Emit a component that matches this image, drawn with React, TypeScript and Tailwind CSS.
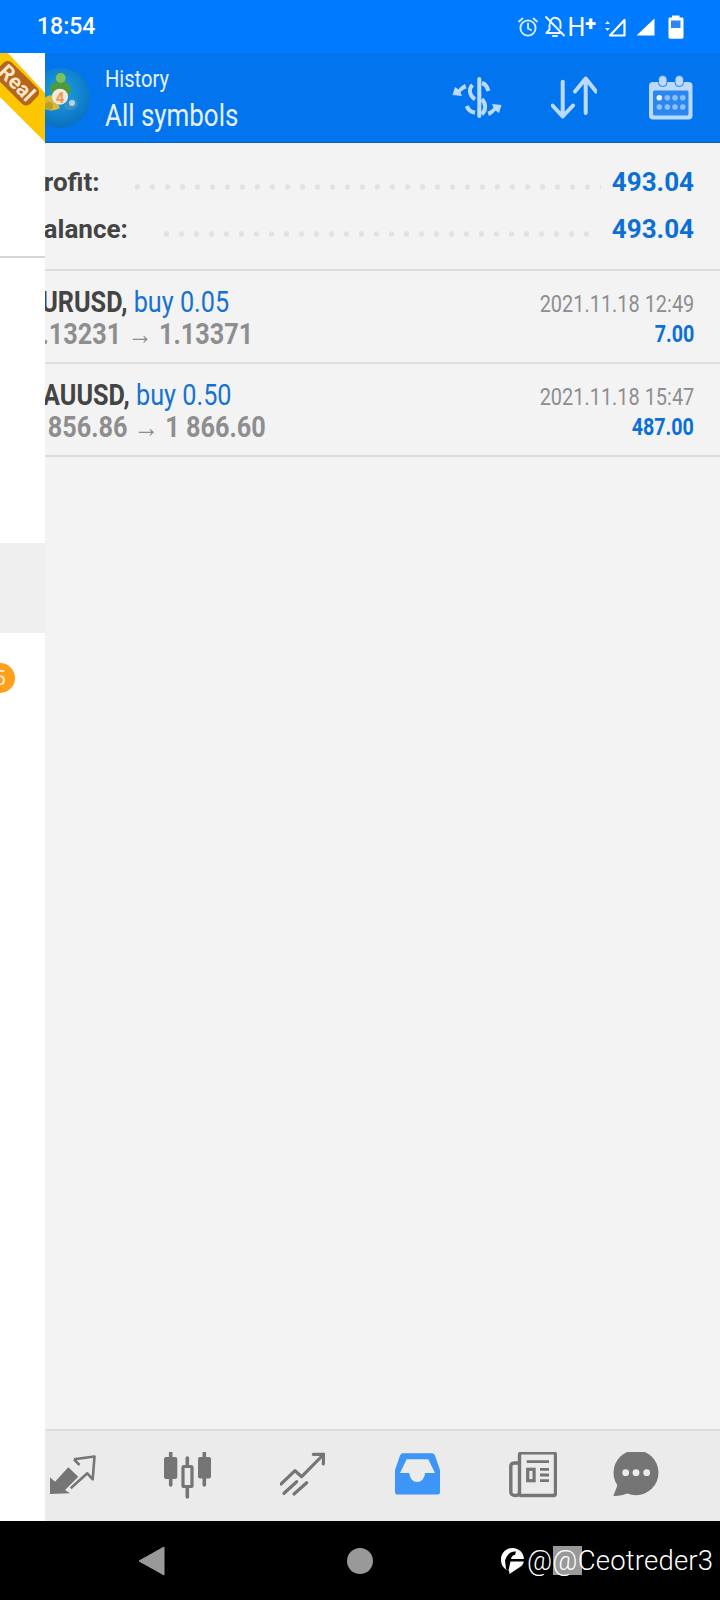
import React from 'react';

const condensed = "font-['Roboto',sans-serif] whitespace-nowrap";

function AlarmIcon() {
  return (
    <svg width="22" height="22" viewBox="0 0 22 22" fill="none" stroke="#d9ebff" strokeWidth="1.9" strokeLinecap="round">
      <circle cx="11" cy="12" r="7.6" />
      <path d="M11 7.5V12.5L14 14" />
      <path d="M2 5.5L5.5 2.5M20 5.5L16.5 2.5" />
    </svg>
  );
}

function MutedBellIcon() {
  return (
    <svg width="22" height="24" viewBox="0 0 22 24" fill="none" stroke="#eaf3ff" strokeWidth="2" strokeLinecap="round" strokeLinejoin="round">
      <path d="M6 8.5C6 6.5 6.5 5 8 4C9 3 11 2.5 13 3.3C15.5 4.3 16.5 6.5 16.5 9V13M5.5 10V14.5L2.5 18H16" />
      <path d="M9 21H13" />
      <path d="M2 2L20 20.5" />
    </svg>
  );
}

function DataSignalIcon() {
  return (
    <svg width="21" height="20" viewBox="0 0 21 20" fill="none">
      <path d="M19.5 3V18.5H5L19.5 3Z" stroke="#fff" strokeWidth="2.2" strokeLinejoin="round" />
      <path d="M2.5 4L5 7H0Z M2.5 14L5 11H0Z" fill="#d9ebff" />
    </svg>
  );
}

function SignalIcon() {
  return (
    <svg width="19" height="18" viewBox="0 0 19 18">
      <path d="M18.5 0.5V17.5H0.5Z" fill="#fff" />
    </svg>
  );
}

function BatteryIcon() {
  return (
    <svg width="16" height="24" viewBox="0 0 16 24">
      <path d="M4 0.5H11.5V2.5H14C15 2.5 15.5 3 15.5 4V22C15.5 23 15 23.7 14 23.7H2C1 23.7 0.5 23 0.5 22V4C0.5 3 1 2.5 2 2.5H4Z" fill="#fff" />
      <rect x="3" y="5.5" width="9.5" height="7.5" fill="#2f86f2" />
    </svg>
  );
}

function SwapIcon() {
  return (
    <svg width="50" height="42" viewBox="0 0 50 42" fill="none" stroke="#bcdaff" strokeWidth="4">
      <path d="M27.3 2V39" strokeLinecap="round" />
      <path d="M30 6C33 7 35.5 10 36.3 14" />
      <path d="M20.5 8C17 11 16.5 18 23 22.3" />
      <path d="M29.7 22.3C34 26 34.5 33 29.7 37.3" />
      <path d="M14.7 29C16 32.5 19 35 23 35.7" />
      <path d="M13 7C10 8.5 8 10.5 6.5 12.5L3 10L0.5 18L10 19L8.5 15.5C10 13.5 12 12 14.5 11.5Z" fill="#bcdaff" stroke="none" />
      <path d="M13 7C10 8.5 8 10.5 6.5 12.5L3 10L0.5 18L10 19L8.5 15.5C10 13.5 12 12 14.5 11.5Z" fill="#bcdaff" stroke="none" transform="rotate(180 25 23)" />
    </svg>
  );
}

function SortIcon() {
  return (
    <svg width="46" height="44" viewBox="0 0 46 44" fill="none" stroke="#bcdaff" strokeWidth="4" strokeLinecap="round" strokeLinejoin="round">
      <path d="M11.7 5.7V40.5M1.5 29.5L11.7 40.5L22 29.5" />
      <path d="M34.7 37V2.5M24 15.5L34.7 2.5L45 15.5" />
    </svg>
  );
}

function CalendarIcon() {
  return (
    <svg width="44" height="45" viewBox="0 0 44 45">
      <rect x="0" y="7" width="43.5" height="37.5" rx="4" fill="#bcdaff" />
      <rect x="4" y="15.5" width="35.5" height="25" rx="1.5" fill="#2a86f0" />
      <rect x="9.5" y="0.5" width="8.5" height="11" rx="4" fill="#bcdaff" stroke="#1b7cee" strokeWidth="1" />
      <rect x="26" y="0.5" width="8.5" height="11" rx="4" fill="#bcdaff" stroke="#1b7cee" strokeWidth="1" />
      <circle cx="10.3" cy="22.7" r="2.8" fill="#eaf4ff" />
      <circle cx="18.3" cy="22.7" r="2.8" fill="#8cc0fa" />
      <circle cx="26" cy="22.7" r="2.8" fill="#8cc0fa" />
      <circle cx="33.7" cy="22.7" r="2.8" fill="#8cc0fa" />
      <circle cx="10.3" cy="32" r="2.8" fill="#8cc0fa" />
      <circle cx="18.3" cy="32" r="2.8" fill="#8cc0fa" />
      <circle cx="26" cy="32" r="2.8" fill="#8cc0fa" />
      <circle cx="33.7" cy="32" r="2.8" fill="#8cc0fa" />
    </svg>
  );
}

function LogoIcon() {
  return (
    <svg width="60" height="60" viewBox="0 0 60 60" className="shrink-0 -ml-[15px]">
      <defs>
        <radialGradient id="logo-bg" cx="50%" cy="40%" r="60%">
          <stop offset="0%" stopColor="#1ca3e4" />
          <stop offset="100%" stopColor="#0b6fc0" />
        </radialGradient>
      </defs>
      <circle cx="30" cy="30" r="30" fill="url(#logo-bg)" />
      <path d="M13 33C15 28 20 26 24 28L30 40C26 43 18 43 15 41C13 39 13 36 13 33Z" fill="#d7b93b" />
      <circle cx="19" cy="38" r="4" fill="#b99f2a" />
      <path d="M34 38C38 30 44 28 47 33C49 38 45 42 40 42C37 42 35 41 34 38Z" fill="#3b8fc4" />
      <circle cx="42" cy="35" r="3" fill="#a5d8ef" />
      <path d="M20 22C20 15 26 13 30.7 13C36 13 41 16 41 23L38 28H22Z" fill="#4d9a3f" />
      <circle cx="30.7" cy="10" r="5" fill="#7fbf5c" />
      <circle cx="30" cy="28.7" r="8" fill="#f4e9dc" />
      <text x="30" y="34.5" textAnchor="middle" fontSize="15" fontWeight="700" fontFamily="Roboto, sans-serif" fill="#eb9a4c">4</text>
    </svg>
  );
}

function TradeIcon() {
  return (
    <svg width="48" height="48" viewBox="0 0 48 48" fill="none">
      <path d="M2 25.3L7 29.7L20.3 15.3L30.3 24.7L17 38L22 41.3L2 42Z" fill="#757575" />
      <path d="M26 7.3L46.5 4.5L44.7 27.3L39.3 21.3L22.7 36.3M31.5 13L26 7.3" stroke="#757575" strokeWidth="2.6" strokeLinejoin="round" />
    </svg>
  );
}

function QuotesIcon() {
  return (
    <svg width="49" height="48" viewBox="0 0 49 48" fill="none" stroke="#757575">
      <path d="M7.7 1V33M24.3 6V45M41.3 1V33" strokeWidth="3.6" strokeLinecap="round" />
      <rect x="1" y="5" width="13.3" height="22" rx="2" fill="#757575" strokeWidth="0" />
      <rect x="20" y="14.5" width="9" height="20" rx="1" fill="#ebebeb" strokeWidth="3.2" />
      <rect x="35" y="5" width="13" height="21.5" rx="2" fill="#757575" strokeWidth="0" />
    </svg>
  );
}

function ChartIcon() {
  return (
    <svg width="45" height="48" viewBox="0 0 45 48" fill="none" stroke="#757575" strokeWidth="3.2" strokeLinecap="round" strokeLinejoin="round">
      <path d="M1 32L15 18.7L21.7 24.7L43.5 2.5" />
      <path d="M33.3 2.3H43.8L43.3 12" />
      <path d="M4 41.3L16.7 29.7M14 42L26.7 30.7" />
    </svg>
  );
}

function InboxIcon() {
  return (
    <svg width="45" height="48" viewBox="0 0 45 48">
      <path
        fillRule="evenodd"
        d="M8 1.3H37Q39 1.3 40 3.5L45 18V40Q45 42.5 43 42.5H2Q0 42.5 0 40V18L5 3.5Q6 1.3 8 1.3ZM5 21L11.7 7.3H33.3L40 21H30A7.8 9 0 0 1 14.3 21Z"
        fill="#3d95f5"
      />
    </svg>
  );
}

function NewsIcon() {
  return (
    <svg width="48" height="48" viewBox="0 0 48 48" fill="none" stroke="#757575">
      <path d="M10.5 43.5H44C45.5 43.5 46.5 42.5 46.5 41V3C46.5 1.5 45.5 0.7 44 0.7H13C11.5 0.7 10.5 1.5 10.5 3V41C10.5 42.5 8.5 43.5 6 43.5C3.5 43.5 1.8 42 1.8 40V14C1.8 12 3.5 11 6 11H10" strokeWidth="3.4" />
      <path d="M17.7 9.7H40M31 17.3H40M31 23H40M31 28.7H40" strokeWidth="2.8" />
      <rect x="18.7" y="17.3" width="6.4" height="11.4" strokeWidth="3.2" />
    </svg>
  );
}

function ChatIcon() {
  return (
    <svg width="46" height="48" viewBox="0 0 46 48">
      <circle cx="23" cy="20.7" r="22.5" fill="#757575" />
      <path d="M5.3 31L0.3 44C7 44 13 42.5 18 39.5Z" fill="#757575" />
      <circle cx="12.7" cy="20.7" r="3.4" fill="#ebebeb" />
      <circle cx="23" cy="20.7" r="3.4" fill="#ebebeb" />
      <circle cx="33.7" cy="20.7" r="3.4" fill="#ebebeb" />
    </svg>
  );
}

function WatermarkLogo() {
  return (
    <svg width="25" height="28" viewBox="0 0 25 28" className="shrink-0">
      <path d="M12.5 1C19 1 24 6 24 12.5C24 15 23 17.5 21.5 19L9.5 27L9 23.5C4 22.5 1 18 1 12.5C1 6 6 1 12.5 1Z" fill="#fff" />
      <path d="M5 13.5C7 7 11 4 16 4.5L15 8C12.5 8 11.5 10 11 12H24V14.5H10.5L8.5 23.5L6 22Z" fill="#000" />
    </svg>
  );
}

function Drawer() {
  return (
    <aside className="relative w-[45px] shrink-0 overflow-hidden bg-white">
      <svg width="45" height="90" viewBox="0 0 45 90" className="absolute left-0 top-0">
        <path d="M0 0H8L45 40V89L0 44Z" fill="#fcc600" />
      </svg>
      <span className="absolute left-[-7px] top-[19px] rotate-45 rounded-[6px] bg-[#b5651d] px-[3px] font-['Roboto',sans-serif] text-[21px] leading-[22px] font-bold text-[#ffe8cc]">
        Real
      </span>
      <div className="mt-[203px] h-[2px] bg-[#d6d6d6]" />
      <div className="mt-[285px] h-[90px] bg-[#efefef]" />
      <div className="mt-[30px] -ml-[15px] flex h-[30px] w-[30px] items-center justify-center rounded-full bg-[#ff9f1c] font-['Roboto',sans-serif] text-[20px] text-[#ffeed6]">
        5
      </div>
    </aside>
  );
}

function SummaryRow({ label, value, dotsClass }: { label: string; value: string; dotsClass: string }) {
  return (
    <div className="flex h-[47px] items-center font-['Roboto',sans-serif]">
      <span className="-ml-[18px] text-[26px] font-bold whitespace-nowrap text-[#444]">{label}</span>
      <div className={`mt-[9px] h-[6px] flex-1 self-center bg-[radial-gradient(circle,#e2e2e2_2.4px,transparent_3px)] bg-[length:15px_6px] bg-repeat-x ${dotsClass}`} />
      <span className="ml-[11px] text-[26px] font-bold text-[#0a6fd6]">{value}</span>
    </div>
  );
}

function DealRow({ symbol, side, prices, time, profit }: { symbol: string; side: string; prices: string; time: string; profit: string }) {
  return (
    <div className="flex h-[93px] justify-between border-b-2 border-[#dcdcdc] pr-[26px]">
      <div className="-ml-[18px] pt-[15px]">
        <div className={`${condensed} origin-left scale-x-[0.87] text-[29px] leading-[33px]`}>
          <span className="font-bold text-[#444]">{symbol}, </span>
          <span className="text-[#1672d2]">{side}</span>
        </div>
        <div className={`${condensed} origin-left scale-x-[0.87] text-[29px] leading-[30px] font-bold text-[#8e8e90]`}>{prices}</div>
      </div>
      <div className="flex flex-col items-end pt-[18px]">
        <div className={`${condensed} origin-right scale-x-[0.83] text-[24px] leading-[30px] text-[#8e8e90]`}>{time}</div>
        <div className={`${condensed} origin-right scale-x-[0.82] text-[24px] leading-[30px] font-bold text-[#0a6fd6]`}>{profit}</div>
      </div>
    </div>
  );
}

export default function App() {
  return (
    <div className="flex h-[1600px] w-[720px] flex-col overflow-hidden bg-black">
      {/* Status bar */}
      <div className="flex h-[53px] shrink-0 items-center bg-[#007aff] pt-[1px] text-white">
        <span className="ml-[37px] font-['Roboto',sans-serif] text-[23px] font-medium">18:54</span>
        <div className="ml-auto mr-[36px] flex items-center">
          <AlarmIcon />
          <div className="ml-[5px]"><MutedBellIcon /></div>
          <span className="ml-[1px] font-['Roboto',sans-serif] text-[25px] leading-none text-white">H</span>
          <span className="-mt-[8px] font-['Roboto',sans-serif] text-[20px] leading-none font-black text-white">+</span>
          <div className="ml-[9px]"><DataSignalIcon /></div>
          <div className="ml-[10px]"><SignalIcon /></div>
          <div className="ml-[13px]"><BatteryIcon /></div>
        </div>
      </div>

      <div className="flex min-h-0 flex-1">
        <Drawer />

        <main className="flex min-w-0 flex-1 flex-col overflow-hidden bg-[#f3f3f3]">
          {/* Toolbar */}
          <header className="flex h-[90px] shrink-0 items-center overflow-hidden border-b border-[#0b62c0] bg-[#0275ee]">
            <LogoIcon />
            <div className="ml-[15px] w-[200px] pt-[4px] text-[#e6f1ff]">
              <div className={`${condensed} origin-left scale-x-[0.82] text-[24.5px] leading-[30px]`}>History</div>
              <div className={`${condensed} origin-left scale-x-[0.81] text-[32px] leading-[42px]`}>All symbols</div>
            </div>
            <div className="ml-auto mr-[27px] flex items-center">
              <SwapIcon />
              <div className="ml-[49px]"><SortIcon /></div>
              <div className="ml-[52px]"><CalendarIcon /></div>
            </div>
          </header>

          {/* Totals */}
          <div className="h-[128px] shrink-0 border-b-2 border-[#dcdcdc] pt-[16px] pr-[26px]">
            <SummaryRow label="Profit:" value="493.04" dotsClass="ml-[30px]" />
            <SummaryRow label="Balance:" value="493.04" dotsClass="ml-[31px] mr-[6px]" />
          </div>

          <DealRow symbol="EURUSD" side="buy 0.05" prices="1.13231 → 1.13371" time="2021.11.18 12:49" profit="7.00" />
          <DealRow symbol="XAUUSD" side="buy 0.50" prices="1 856.86 → 1 866.60" time="2021.11.18 15:47" profit="487.00" />

          <div className="flex-1" />

          {/* Bottom tabs */}
          <nav className="flex h-[92px] shrink-0 items-center border-t-2 border-[#dcdcdc] bg-[#ebebeb]">
            <div className="ml-[3px]"><TradeIcon /></div>
            <div className="ml-[67px]"><QuotesIcon /></div>
            <div className="ml-[68px]"><ChartIcon /></div>
            <div className="ml-[70px]"><InboxIcon /></div>
            <div className="ml-[69px]"><NewsIcon /></div>
            <div className="ml-[56px]"><ChatIcon /></div>
          </nav>
        </main>
      </div>

      {/* Android nav bar */}
      <div className="flex h-[79px] shrink-0 items-center bg-black">
        <svg width="27" height="30" viewBox="0 0 27 30" className="ml-[138px] shrink-0">
          <path d="M26 1V29L1 15Z" fill="#999" stroke="#999" strokeWidth="1" strokeLinejoin="round" />
        </svg>
        <div className="ml-[182px] h-[26px] w-[26px] shrink-0 rounded-full bg-[#999]" />
        <div className="relative ml-[127px] flex items-center">
          <WatermarkLogo />
          <span className="absolute left-[53px] top-[-1px] h-[29px] w-[29px] bg-[#999]" />
          <span className="relative ml-[2px] font-['Roboto',sans-serif] text-[27.5px] leading-none font-light tracking-[0.2px] whitespace-nowrap text-white">@@Ceotreder3</span>
        </div>
      </div>
    </div>
  );
}
